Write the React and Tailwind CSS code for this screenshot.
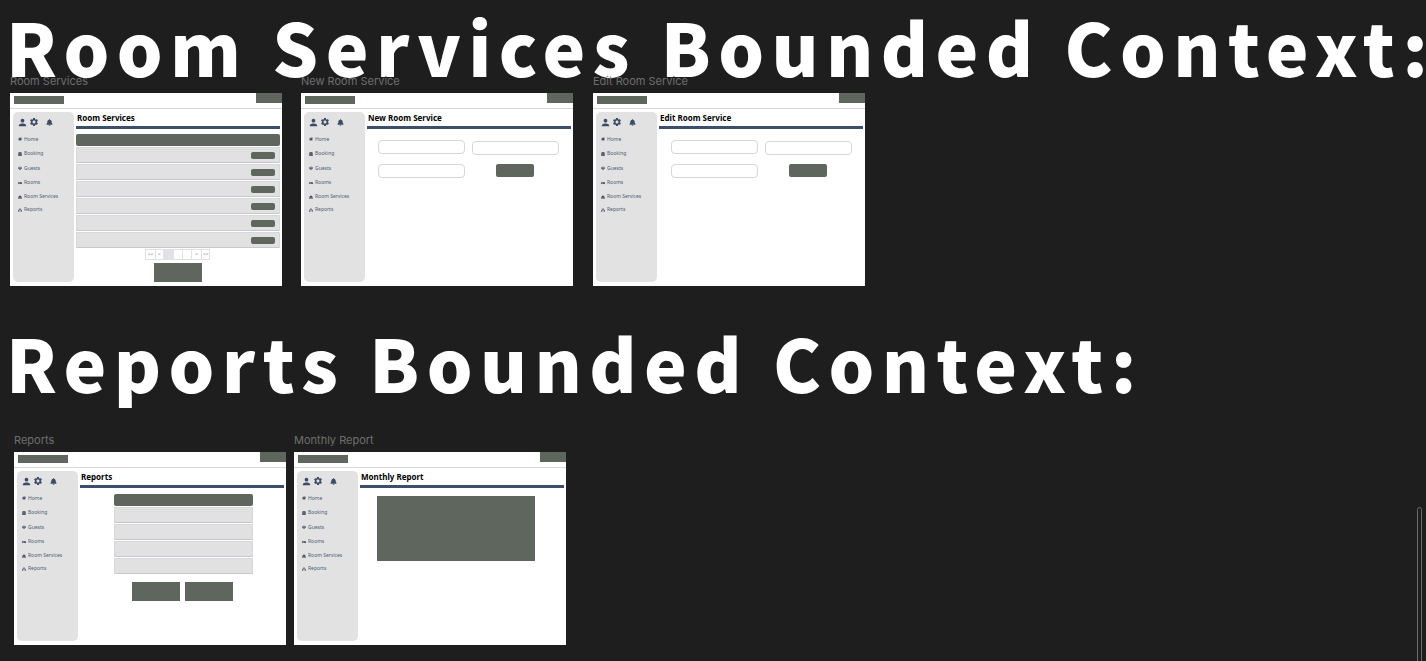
import { FaBell, FaHome, FaCalendarAlt, FaUsers, FaBed, FaConciergeBell, FaSitemap } from 'react-icons/fa';
import { MdPerson, MdSettings } from 'react-icons/md';

const navItems = [
  { icon: FaHome, label: 'Home', cls: 'h-[14.5px]' },
  { icon: FaCalendarAlt, label: 'Booking', cls: 'h-[14.5px]' },
  { icon: FaUsers, label: 'Guests', cls: 'h-[14.5px]' },
  { icon: FaBed, label: 'Rooms', cls: 'h-[14.5px]' },
  { icon: FaConciergeBell, label: 'Room Services', cls: 'h-[13.5px]' },
  { icon: FaSitemap, label: 'Reports', cls: 'h-[13px]' },
];

const Sidebar = () => (
  <div className="w-[61px] h-[170px] shrink-0 rounded-[5px] bg-[#e2e2e2] pt-[5px]">
    <div className="flex items-center h-[10px] pl-[4px] text-[#3a4c66]">
      <MdPerson size={11} />
      <MdSettings size={10} className="ml-[1px]" />
      <FaBell size={7} className="ml-[7px]" />
    </div>
    <div className="mt-[5px] pl-[5px]">
      {navItems.map(({ icon: Icon, label, cls }) => (
        <div key={label} className={`flex items-center gap-[2px] text-[5px] text-[#4d5d74] ${cls}`}>
          <Icon size={4} className="shrink-0 text-[#2c3a50]" />
          <span>{label}</span>
        </div>
      ))}
    </div>
  </div>
);

const Frame = ({ label, title, className, children }) => (
  <div className={`w-[272px] shrink-0 ${className || ''}`}>
    <div className="h-[14px] mb-[5px] text-[11px] leading-[14px] text-[#6f6f6f] font-['Inter',sans-serif] whitespace-nowrap">{label}</div>
    <div className="h-[193px] bg-white flex flex-col overflow-hidden font-['Noto_Sans',sans-serif]">
      <div className="h-[16px] shrink-0 border-b border-[#d5d9de] flex justify-between items-start">
        <div className="w-[50px] h-[8px] bg-[#5f665d] mt-[3px] ml-[4px]" />
        <div className="w-[26px] h-[10px] bg-[#5f665d]" />
      </div>
      <div className="flex flex-1 pl-[3px] pr-[2px] pt-[3px]">
        <Sidebar />
        <div className="flex-1 ml-[2px] min-w-0">
          <div className="h-[14px] pl-[1px] text-[8px] leading-[11px] font-bold text-black whitespace-nowrap">{title}</div>
          <div className="h-[3px] bg-[#3c4e6c]" />
          {children}
        </div>
      </div>
    </div>
  </div>
);

const Row = ({ button }) => (
  <div className="flex items-center justify-end pr-[4px] mt-[1px] h-[16px] rounded-[1px] bg-[#e1e1e1] border border-[#d6d8dc] border-b-[#c5c8cd]">
    {button && <div className="w-[24px] h-[7px] rounded-[2px] bg-[#5f665d]" />}
  </div>
);

const Pager = () => (
  <div className="ml-[69px] mt-[1px] w-[65px] h-[11px] flex border border-[#dfe1e7] text-[5px] text-[#66708a] bg-white">
    <div className="w-[10px] flex items-center justify-center border-r border-[#dfe1e7]">&lt;&lt;</div>
    <div className="w-[8px] flex items-center justify-center border-r border-[#dfe1e7]">&lt;</div>
    <div className="w-[10px] bg-[#e1e1e1] border-r border-[#dfe1e7]" />
    <div className="w-[9px] border-r border-[#dfe1e7]" />
    <div className="w-[9px] border-r border-[#dfe1e7]" />
    <div className="w-[10px] flex items-center justify-center border-r border-[#dfe1e7]">&gt;</div>
    <div className="flex-1 flex items-center justify-center">&gt;&gt;</div>
  </div>
);

const ListContent = () => (
  <div>
    <div className="mt-[5px] h-[12px] rounded-[2px] bg-[#5f665d]" />
    <Row button />
    <Row button />
    <Row button />
    <Row button />
    <Row button />
    <Row button />
    <Pager />
    <div className="mx-auto mt-[3px] w-[48px] h-[19px] bg-[#5f665d]" />
  </div>
);

const Input = ({ className }) => (
  <div className={`w-[87px] h-[14px] rounded-[4px] border border-[#d5d7dc] bg-white ${className || ''}`} />
);

const FormContent = ({ className }) => (
  <div className={`pt-[11px] flex gap-[7px] ${className}`}>
    <div>
      <Input />
      <Input className="mt-[10px]" />
    </div>
    <div>
      <Input className="mt-[1px]" />
      <div className="w-[38px] h-[13px] mt-[9px] ml-[24px] rounded-[2px] bg-[#5f665d]" />
    </div>
  </div>
);

const ReportsContent = () => (
  <div className="w-[139px] ml-[34px]">
    <div className="mt-[6px] h-[12px] rounded-[2px] bg-[#5f665d]" />
    <Row />
    <Row />
    <Row />
    <Row />
    <div className="flex gap-[5px] mt-[8px] pl-[18px]">
      <div className="w-[48px] h-[19px] bg-[#5f665d]" />
      <div className="w-[48px] h-[19px] bg-[#5f665d]" />
    </div>
  </div>
);

const MonthlyContent = () => (
  <div className="w-[158px] h-[65px] ml-[17px] mt-[8px] bg-[#5f665d]" />
);

const Heading = ({ children, className }) => (
  <h1 className={`text-[72px] leading-[72px] font-black text-white tracking-[7.4px] whitespace-nowrap pl-[6px] font-['Noto_Sans_CJK_JP',sans-serif] ${className || ''}`}>
    {children}
  </h1>
);

export default function App() {
  return (
    <div className="relative h-[661px] w-full overflow-hidden bg-[#1e1e1e]">
      <Heading className="pt-[10px]">Room Services Bounded Context:</Heading>
      <div className="flex pl-[10px] mt-[-8px]">
        <Frame label="Room Services" title="Room Services"><ListContent /></Frame>
        <Frame label="New Room Service" title="New Room Service" className="ml-[19px]"><FormContent className="pl-[11px]" /></Frame>
        <Frame label="Edit Room Service" title="Edit Room Service" className="ml-[20px]"><FormContent className="pl-[12px]" /></Frame>
      </div>
      <Heading className="mt-[40px]">Reports Bounded Context:</Heading>
      <div className="flex pl-[14px] mt-[35px]">
        <Frame label="Reports" title="Reports"><ReportsContent /></Frame>
        <Frame label="Monthly Report" title="Monthly Report" className="ml-[8px]"><MonthlyContent /></Frame>
      </div>
      <div className="absolute left-[1417px] top-[507px] w-[5px] h-[170px] rounded-t-[3px] border border-[#6b6b6b]" />
    </div>
  );
}
